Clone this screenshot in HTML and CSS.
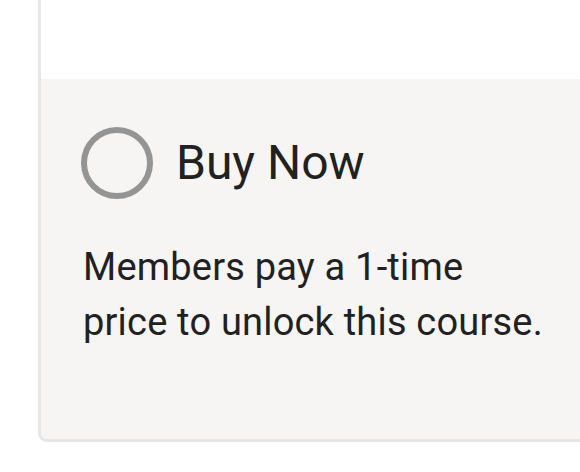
FILE: index.html
```html
<!DOCTYPE html>
<html>
<head>
<meta charset="utf-8">
<link rel="stylesheet" href="styles.css">
</head>
<body>
<div class="card">
  <div class="card-top"></div>
  <div class="option">
    <div class="option-head">
      <span class="radio"></span>
      <span class="label">Buy Now</span>
    </div>
    <p class="desc">Members pay a 1-time price to unlock this course.</p>
  </div>
</div>
</body>
</html>
```

FILE: styles.css
```css
html, body {
  margin: 0;
  padding: 0;
  background: #ffffff;
  overflow: hidden;
}
body {
  width: 580px;
  height: 472px;
  font-family: Roboto, "Liberation Sans", sans-serif;
  color: #212121;
}
.card {
  margin-left: 38px;
  width: 600px;
  border-left: 3px solid #e6e6e6;
  border-bottom: 3px solid #e6e6e6;
  border-bottom-left-radius: 9px;
  overflow: hidden;
  display: flex;
  flex-direction: column;
}
.card-top {
  height: 79px;
  background: #ffffff;
}
.option {
  background: #f6f5f4;
  padding: 48px 0 0 40px;
  height: 312px;
}
.option-head {
  display: flex;
  align-items: center;
  gap: 23px;
}
.radio {
  box-sizing: border-box;
  width: 72px;
  height: 72px;
  border: 6px solid #949494;
  border-radius: 50%;
  flex: none;
}
.label {
  font-size: 48px;
  line-height: 56px;
}
.desc {
  margin: 41px 0 0 2px;
  width: 470px;
  font-size: 38px;
  line-height: 55px;
  letter-spacing: 0.2px;
}
```
